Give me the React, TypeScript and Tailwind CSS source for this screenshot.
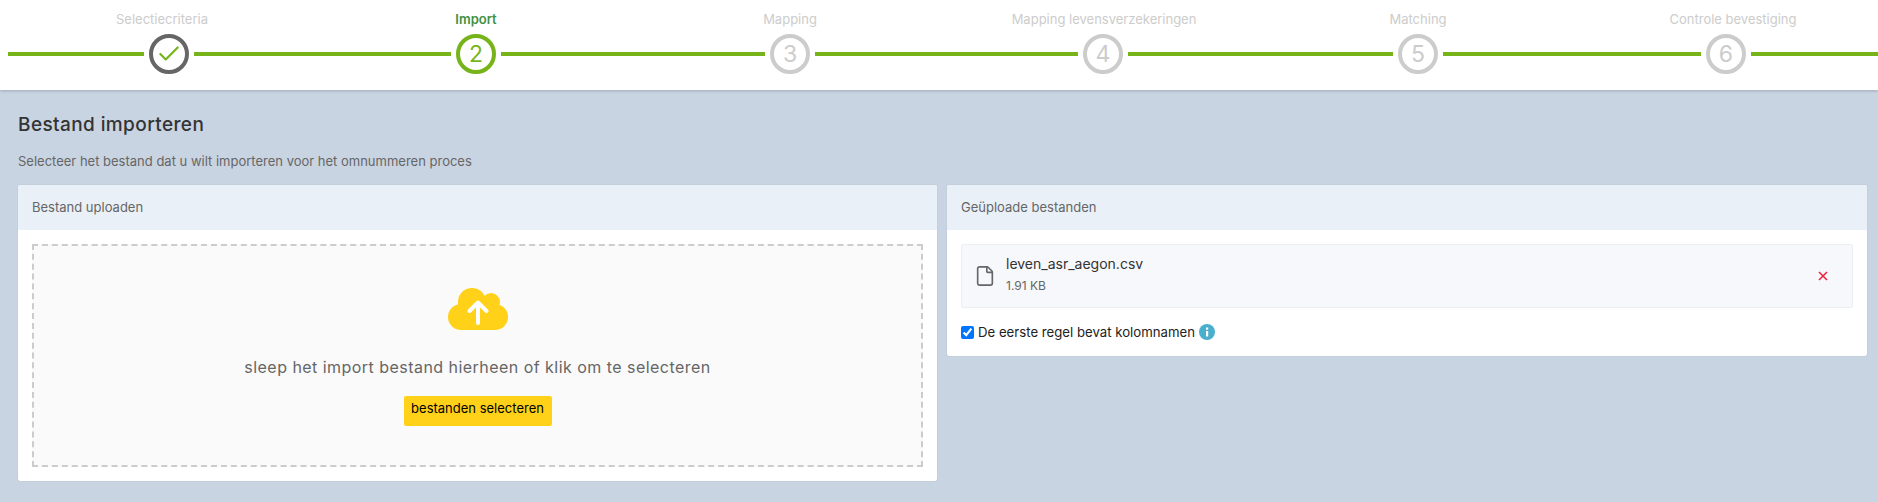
import { Check, File } from 'lucide-react'

const steps = [
    { label: 'Selectiecriteria', state: 'done', n: 1, shift: '-translate-x-[7px]' },
    { label: 'Import', state: 'active', n: 2, shift: '' },
    { label: 'Mapping', state: 'todo', n: 3, shift: '' },
    { label: 'Mapping levensverzekeringen', state: 'todo', n: 4, shift: 'translate-x-[1px]' },
    { label: 'Matching', state: 'todo', n: 5, shift: '' },
    { label: 'Controle bevestiging', state: 'todo', n: 6, shift: 'translate-x-[7px]' },
]

const StepCircle = ({ state, n }: { state: string; n: number }) => {
    const border = state === 'done' ? 'border-[#666666]' : state === 'active' ? 'border-[#76b41a] text-[#76b41a]' : 'border-[#cccccc] text-[#cccccc]'
    return (
        <div className={`w-10 h-10 rounded-full border-4 bg-white flex items-center justify-center text-[23px] leading-none font-normal ${border}`}>
            {state === 'done' ? <Check size={26} strokeWidth={2} className="text-[#76b41a]" /> : n}
        </div>
    )
}

const CloudUpload = () => (
    <svg width="60" height="42" viewBox="0 0 60 42" className="block">
        <g fill="#ffd119">
            <circle cx="24" cy="14" r="14" />
            <circle cx="43" cy="14" r="9" />
            <circle cx="13" cy="29" r="13" />
            <circle cx="47" cy="29" r="13" />
            <rect x="13" y="16" width="34" height="26" />
        </g>
        <path d="M30 35V15M21.5 23L30 14.5L38.5 23" fill="none" stroke="#fff" strokeWidth="4" strokeLinecap="round" strokeLinejoin="round" />
    </svg>
)

const App = () => {
    return (
        <div className="h-[502px] w-full overflow-hidden bg-[#c9d4e2] font-['Inter',sans-serif] text-[#666666]">
            <header className="h-[90px] bg-white shadow-[0_1px_3px_rgba(0,0,0,0.2)] pl-2 pt-[12px]">
                <div className="grid grid-cols-[136px_50px_257px_50px_264px_50px_263px_50px_265px_50px_258px_50px_1fr] grid-rows-[14px_40px] gap-y-[8px] items-center">
                    {steps.map((s, i) => (
                        <div
                            key={s.label}
                            style={{ gridColumnStart: i * 2 + 2 }}
                            className={`row-start-1 justify-self-center whitespace-nowrap text-[13px] leading-[14px] ${s.shift} ${s.state === 'active' ? 'font-semibold text-[#3f9142]' : 'text-[#cccccc]'}`}
                        >
                            {s.label}
                        </div>
                    ))}
                    {steps.map((s, i) => (
                        <div key={s.n} className="contents">
                            <div style={{ gridColumnStart: i * 2 + 1 }} className="row-start-2 h-1 bg-[#76b41a]" />
                            <div style={{ gridColumnStart: i * 2 + 2 }} className="row-start-2 justify-self-center">
                                <StepCircle state={s.state} n={s.n} />
                            </div>
                        </div>
                    ))}
                    <div className="row-start-2 col-start-13 h-1 bg-[#76b41a]" />
                </div>
            </header>

            <main className="pl-[18px]">
                <h1 className="mt-[24px] text-[19px] leading-[22px] font-medium tracking-[0.4px] text-[#333333]">Bestand importeren</h1>
                <p className="mt-[17px] text-[13px] leading-[16px]">Selecteer het bestand dat u wilt importeren voor het omnummeren proces</p>

                <div className="mt-[16px] grid grid-cols-[919px_920px] gap-[10px] items-start">
                    <section className="h-[296px] rounded-[2px] bg-white shadow-[0_0_1px_rgba(0,0,0,0.25)]">
                        <div className="h-[45px] rounded-t-[2px] bg-[#e9f0f8] px-[14px] flex items-center text-[13px]">Bestand uploaden</div>
                        <div className="p-[14px] pb-[13px]">
                            <div className="h-[223px] border-2 border-dashed border-[#cccccc] bg-[#fafafa] flex flex-col items-center pt-[42px]">
                                <CloudUpload />
                                <p className="mt-[27px] text-[16px] leading-[20px] tracking-[0.46px]">sleep het import bestand hierheen of klik om te selecteren</p>
                                <button className="mt-[19px] h-[30px] w-[148px] rounded-[2px] bg-[#ffd119] pb-[5px] text-[13px] leading-none text-black">bestanden selecteren</button>
                            </div>
                        </div>
                    </section>

                    <section className="h-[171px] rounded-[2px] bg-white shadow-[0_0_1px_rgba(0,0,0,0.25)]">
                        <div className="h-[45px] rounded-t-[2px] bg-[#e9f0f8] px-[14px] flex items-center text-[13px]">Geüploade bestanden</div>
                        <div className="px-[14px] pt-[14px]">
                            <div className="h-[64px] rounded-[2px] border border-[#eceef2] bg-[#f7f8fb] flex items-center pl-[12px] pr-[24px]">
                                <File size={22} strokeWidth={1.8} className="-mt-[1px] text-[#666666]" />
                                <div className="ml-[10px] flex-1 -mt-[4px]">
                                    <div className="text-[14px] leading-[18px] text-[#333333]">leven_asr_aegon.csv</div>
                                    <div className="mt-[5px] text-[12px] leading-[15px]">1.91 KB</div>
                                </div>
                                <svg width="10" height="10" viewBox="0 0 10 10">
                                    <path d="M1 1L9 9M9 1L1 9" stroke="#e8283c" strokeWidth="1.6" />
                                </svg>
                            </div>
                            <label className="mt-[16px] flex items-center text-[13.2px] leading-[16px] text-[#222222]">
                                <input type="checkbox" defaultChecked className="m-0 h-[13px] w-[13px] accent-[#0075ff]" />
                                <span className="ml-[4px]">De eerste regel bevat kolomnamen</span>
                                <svg width="16" height="16" viewBox="0 0 16 16" className="ml-[4px]">
                                    <circle cx="8" cy="8" r="8" fill="#49afcd" />
                                    <rect x="7" y="7" width="2.2" height="5.5" fill="#fff" />
                                    <rect x="7" y="3.5" width="2.2" height="2.2" fill="#fff" />
                                </svg>
                            </label>
                        </div>
                    </section>
                </div>
            </main>
        </div>
    )
}

export default App
